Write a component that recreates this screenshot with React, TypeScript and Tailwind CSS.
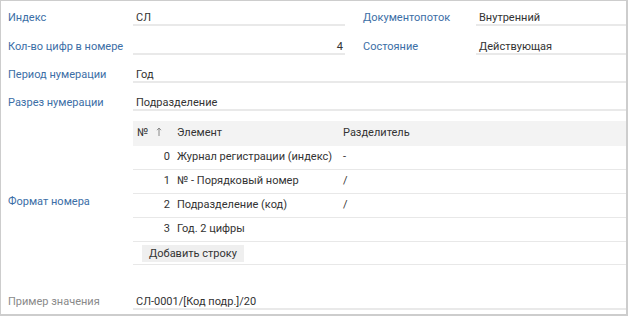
import React from 'react';

const FONT = "font-['Roboto','Open_Sans',sans-serif]";
const LABEL = 'w-[132px] shrink-0 pl-[7px] pb-[2px] leading-[13px] text-[#3b6ea6] whitespace-nowrap';
const FIELD = 'border-b-2 border-[#e9e9e9] leading-[13px] text-[#333] pl-[3px] pr-[2px] whitespace-nowrap';

const rows = [
  { n: 0, el: 'Журнал регистрации (индекс)', sep: '-' },
  { n: 1, el: '№ - Порядковый номер', sep: '/' },
  { n: 2, el: 'Подразделение (код)', sep: '/' },
  { n: 3, el: 'Год. 2 цифры', sep: '' },
];

const SortUp = () => (
  <svg width="6" height="10" viewBox="0 0 6 10" className="inline-block ml-[8px] -mt-[2px]">
    <path d="M3 1V9M1 3.2L3 1L5 3.2" fill="none" stroke="#888" strokeWidth="1" />
  </svg>
);

const App: React.FC = () => {
  return (
    <div className={`${FONT} text-[11px] w-[628px] h-[316px] bg-white border-t border-l border-r-2 border-b-2 border-[#cdcdcd] overflow-hidden`}>
      <div className="flex flex-col gap-[13.4px] pt-[10.3px]">
        {/* Индекс / Документопоток */}
        <div className="flex items-end">
          <div className={LABEL}>Индекс</div>
          <div className={`${FIELD} w-[212px]`}>СЛ</div>
          <div className="w-[131px] shrink-0 pl-[18px] pb-[2px] leading-[13px] text-[#3b6ea6]">Документопоток</div>
          <div className={`${FIELD} flex-1 pl-[2px]`}>Внутренний</div>
        </div>

        {/* Кол-во цифр / Состояние */}
        <div className="flex items-end">
          <div className={LABEL}>Кол-во цифр в номере</div>
          <div className={`${FIELD} w-[212px] text-right`}>4</div>
          <div className="w-[131px] shrink-0 pl-[18px] pb-[2px] leading-[13px] text-[#3b6ea6]">Состояние</div>
          <div className={`${FIELD} flex-1 pl-[2px]`}>Действующая</div>
        </div>

        <div className="flex items-end">
          <div className={LABEL}>Период нумерации</div>
          <div className={`${FIELD} flex-1`}>Год</div>
        </div>

        <div className="flex items-end">
          <div className={LABEL}>Разрез нумерации</div>
          <div className={`${FIELD} flex-1`}>Подразделение</div>
        </div>
      </div>

      {/* Формат номера */}
      <div className="flex items-center mt-[9.5px]">
        <div className={LABEL}>Формат номера</div>
        <div className="flex-1 pb-[20px] text-[#333]">
          <div className="flex h-[25px] items-center bg-[#f3f3f3]">
            <div className="w-[40px] pl-[4px] whitespace-nowrap">
              №<SortUp />
            </div>
            <div className="w-[166px] pl-[4px]">Элемент</div>
            <div className="flex-1 pl-[4px]">Разделитель</div>
          </div>
          {rows.map(r => (
            <div key={r.n} className="flex h-[24px] items-center border-b border-[#e8e8e8]">
              <div className="w-[40px] text-right pr-[3px]">{r.n}</div>
              <div className="w-[166px] pl-[4px] whitespace-nowrap">{r.el}</div>
              <div className="flex-1 pl-[4px]">{r.sep}</div>
            </div>
          ))}
          <div className="h-[23px] pt-[3px] border-b border-[#e8e8e8]">
            <button className="ml-[9px] h-[17px] px-[7px] bg-[#efefef] leading-[17px] text-[#333]">
              Добавить строку
            </button>
          </div>
        </div>
      </div>

      {/* Пример значения */}
      <div className="flex items-end mt-[9.7px]">
        <div className={`${LABEL} text-[#8a8a8a]`}>Пример значения</div>
        <div className={`${FIELD} flex-1`}>СЛ-0001/[Код подр.]/20</div>
      </div>
    </div>
  );
};

export default App;
